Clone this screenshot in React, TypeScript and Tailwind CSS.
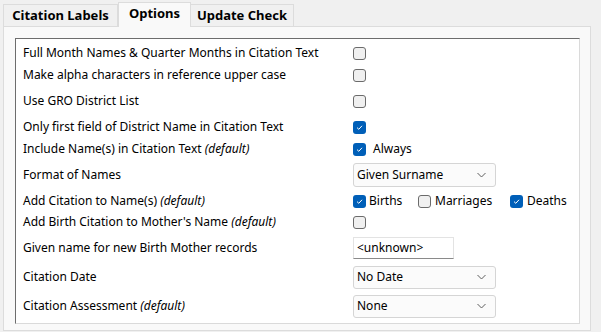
import React from "react";

const font = { fontFamily: '"Noto Sans", "Open Sans", sans-serif' };

function Check({ checked }: { checked?: boolean }) {
  if (checked) {
    return (
      <span className="inline-flex h-[13px] w-[13px] shrink-0 items-center justify-center rounded-[3px] bg-[#005fb8]">
        <svg width="9" height="9" viewBox="0 0 9 9">
          <path d="M2 4.6 L3.8 6.3 L7 2.8" fill="none" stroke="#ffffff" strokeWidth="1" />
        </svg>
      </span>
    );
  }
  return <span className="inline-block h-[13px] w-[13px] shrink-0 rounded-[3px] border border-[#6b6b6b] bg-[#f0f0f0]" />;
}

function Select({ value, h }: { value: string; h: string }) {
  return (
    <div className={`flex w-[143px] items-center justify-between rounded-[3px] border border-[#d5d5d5] bg-[#fbfbfb] pl-[3px] pr-[9px] ${h}`}>
      <span className="text-[12px] text-black">{value}</span>
      <svg width="9" height="6" viewBox="0 0 9 6">
        <path d="M0.5 1 L4.5 5 L8.5 1" fill="none" stroke="#5f5f5f" strokeWidth="1" />
      </svg>
    </div>
  );
}

function Row({ label, def, h, children }: { label: string; def?: boolean; h: string; children?: React.ReactNode }) {
  return (
    <div className={`flex items-center ${h}`}>
      <div className="w-[337px] pl-[7px] text-[12px] text-black">
        {label}
        {def && <span className="italic"> (default)</span>}
      </div>
      <div className="flex items-center">{children}</div>
    </div>
  );
}

export default function App() {
  return (
    <div className="h-[332px] w-[601px] bg-[#f0f0f0] pl-[3px] pr-[10px]" style={font}>
      <div className="flex h-[26px] items-end">
        <div className="flex h-[22px] w-[115px] items-center justify-center border border-b-0 border-[#dcdcdc] bg-[#f0f0f0] text-[13px] font-bold text-black">
          Citation Labels
        </div>
        <div className="relative z-10 -mb-px flex h-[25px] w-[73px] items-center justify-center border border-b-0 border-[#dcdcdc] bg-[#f9f9f9] pb-[2px] text-[13px] font-bold text-black">
          Options
        </div>
        <div className="flex h-[22px] w-[103px] items-center justify-center border border-b-0 border-l-0 border-[#dcdcdc] bg-[#f0f0f0] text-[13px] font-bold text-black">
          Update Check
        </div>
      </div>
      <div className="h-[305px] border border-[#dcdcdc] bg-[#f9f9f9] pl-[11px] pr-[10px] pt-[11px]">
        <div className="h-[286px] border-l border-t border-b border-r border-l-[#6d6d6d] border-t-[#6d6d6d] border-r-[#dadada] border-b-[#dadada] bg-white pt-[3px]">
          <Row label="Full Month Names & Quarter Months in Citation Text" h="h-[22px]">
            <Check />
          </Row>
          <Row label="Make alpha characters in reference upper case" h="h-[22px]">
            <Check />
          </Row>
          <Row label="Use GRO District List" h="h-[30px]">
            <Check />
          </Row>
          <Row label="Only first field of District Name in Citation Text" h="h-[22px]">
            <Check checked />
          </Row>
          <Row label="Include Name(s) in Citation Text" def h="h-[22px]">
            <Check checked />
            <span className="ml-[7px] text-[12px]">Always</span>
          </Row>
          <Row label="Format of Names" h="h-[30px]">
            <Select value="Given Surname" h="h-[24px]" />
          </Row>
          <Row label="Add Citation to Name(s)" def h="h-[22px]">
            <div className="flex w-[65px] items-center">
              <Check checked />
              <span className="ml-[3px] text-[12px]">Births</span>
            </div>
            <div className="flex w-[92px] items-center">
              <Check />
              <span className="ml-[4px] text-[12px]">Marriages</span>
            </div>
            <div className="flex items-center">
              <Check checked />
              <span className="ml-[4px] text-[12px]">Deaths</span>
            </div>
          </Row>
          <Row label="Add Birth Citation to Mother's Name" def h="h-[20px]">
            <Check />
          </Row>
          <Row label="Given name for new Birth Mother records" h="h-[32px]">
            <div className="flex h-[22px] w-[101px] items-center border border-[#e3e3e3] border-b-[#8a8a8a] bg-white pl-[3px] text-[12px]">
              &lt;unknown&gt;
            </div>
          </Row>
          <Row label="Citation Date" h="h-[26px]">
            <Select value="No Date" h="h-[23px]" />
          </Row>
          <Row label="Citation Assessment" def h="h-[32px]">
            <Select value="None" h="h-[23px]" />
          </Row>
        </div>
      </div>
    </div>
  );
}
